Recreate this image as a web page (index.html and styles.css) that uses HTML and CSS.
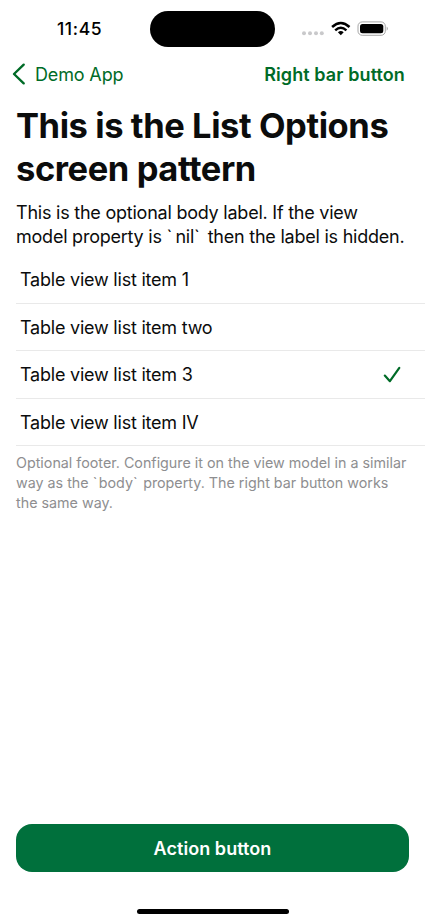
FILE: index.html
```html
<!DOCTYPE html>
<html lang="en">
<head>
<meta charset="utf-8">
<title>List Options</title>
<link rel="stylesheet" href="styles.css">
</head>
<body>
<div class="screen">
  <header class="status">
    <span class="time">11:45</span>
    <span class="island"></span>
    <svg class="indicators" width="90" height="20" viewBox="0 0 90 20">
      <g fill="#c9c9cb"><circle cx="4" cy="14.3" r="2"/><circle cx="10" cy="14.3" r="2"/><circle cx="16" cy="14.3" r="2"/><circle cx="21.800" cy="14.300" r="2"/></g>
      <g fill="none" stroke="#000" stroke-width="2.500"><path d="M32.100 8Q40.800 -.1 49.500 8"/><path d="M35.200 11.300Q40.800 6.200 46.400 11.300"/></g>
      <path d="M37.900 13.200Q40.800 10.900 43.700 13.200L40.800 16.200Z"/>
      <rect x="58" y="2.900" width="27.300" height="13.400" rx="4.200" fill="none" stroke="#a5a5a5"/>
      <rect x="60" y="4.900" width="23.300" height="9.400" rx="2.500"/>
      <path d="M86.700 7.500Q89 9.500 86.700 11.800Z" fill="#a5a5a5"/>
    </svg>
  </header>
  <nav class="nav">
    <a class="back"><svg width="14" height="22" viewBox="0 0 14 22"><path d="M11.700 1.700L2 11L11.700 20.300" fill="none" stroke="#006b27" stroke-width="2.400" stroke-linecap="round" stroke-linejoin="round"/></svg><span>Demo App</span></a>
    <a class="right">Right bar button</a>
  </nav>
  <main class="content">
    <h1>This is the List Options<br>screen pattern</h1>
    <p class="body">This is the optional body label. If the view<br>model property is <span class="tick">`</span>nil<span class="tick">`</span> then the label is hidden.</p>
    <ul class="list">
      <li>Table view list item 1</li>
      <li>Table view list item two</li>
      <li>Table view list item 3<svg class="check" width="20" height="20" viewBox="0 0 20 20"><path d="M2.800 10.600L7.900 16.200L17.300 2.800" fill="none" stroke="#006b27" stroke-width="2.200" stroke-linecap="round" stroke-linejoin="round"/></svg></li>
      <li>Table view list item IV</li>
    </ul>
    <p class="footer">Optional footer. Configure it on the view model in a similar<br>way as the <span class="tick">`</span>body<span class="tick">`</span> property. The right bar button works<br>the same way.</p>
  </main>
  <button class="action">Action button</button>
  <div class="home"></div>
</div>
</body>
</html>
```
FILE: styles.css
```css
* { box-sizing: border-box; }
body { margin: 0; background: #fff; color: #0b0c0c; font-family: Inter, "Liberation Sans", sans-serif; }
.screen { width: 425px; height: 922px; display: flex; flex-direction: column; overflow: hidden; white-space: nowrap; }
.status { height: 57px; flex: none; display: grid; grid-template-columns: 150px 125px 150px; padding-top: 11px; }
.time { padding-left: 57px; font-size: 17.500px; font-weight: 500; line-height: 36px; letter-spacing: 0.600px; color: #000; }
.island { height: 36px; border-radius: 18px; background: #000; }
.indicators { margin: 8px 0 0 25px; }
.nav { height: 36px; flex: none; display: flex; justify-content: space-between; padding: 0 20px 0 12px; line-height: 36px; color: #006b27; font-size: 18px; }
.back { display: flex; align-items: center; gap: 9px; font-weight: 400; letter-spacing: -0.150px; }
.back svg { position: relative; top: -1px; }
.right { font-weight: 600; letter-spacing: 0.100px; }
.content { flex: 1; padding-left: 16px; }
h1 { margin: 12px 0 0; font-size: 34.500px; line-height: 42.500px; font-weight: 700; letter-spacing: -0.420px; }
.body { margin: 11px 0 0; font-size: 18px; line-height: 24px; font-weight: 400; letter-spacing: -0.230px; }
.tick { letter-spacing: 3px; }
.list { list-style: none; margin: 7px 0 0; padding: 0; font-size: 18px; font-weight: 400; letter-spacing: -0.220px; }
.list li { height: 47.500px; padding: 1px 23px 0 4px; border-bottom: 1px solid #e9e9e9; display: flex; align-items: center; justify-content: space-between; }
.footer { margin: 7px 0 0; font-size: 14.300px; line-height: 20px; font-weight: 400; color: #8e8e90; }
.footer .tick { letter-spacing: 1.500px; }
.action { flex: none; margin: 0 16px; height: 48px; border: 0; border-radius: 16px; background: #00703c; color: #fff; font: 600 18px Inter, "Liberation Sans", sans-serif; letter-spacing: 0.060px; }
.home { flex: none; width: 152px; height: 5px; border-radius: 3px; background: #000; margin: 37px auto 8px; }
```
